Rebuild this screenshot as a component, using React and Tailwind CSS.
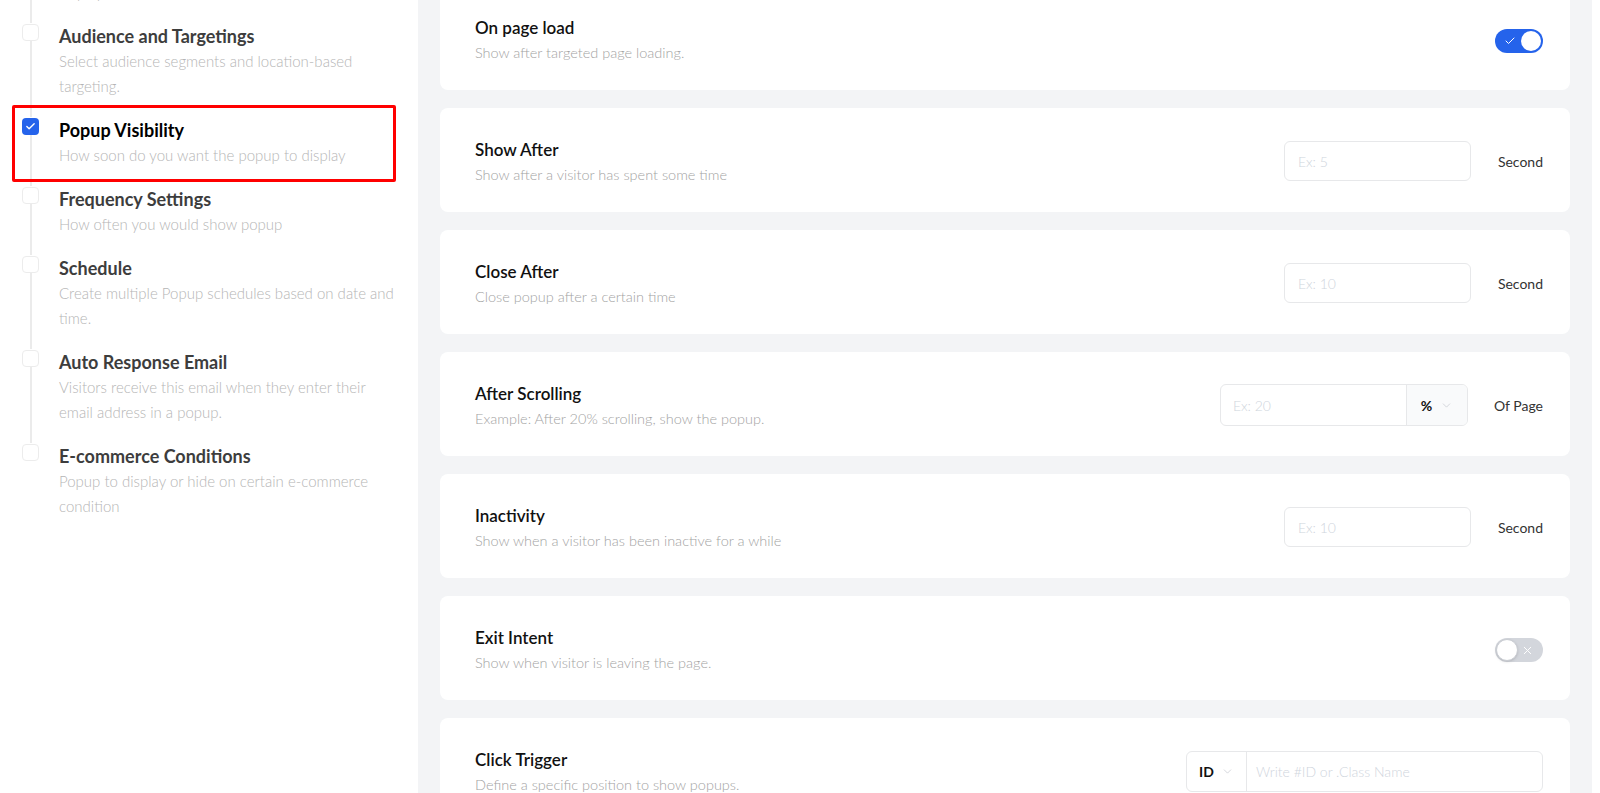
import React from "react";
import { Check, X, ChevronDown } from "lucide-react";

const steps = [
    { title: "Popup Position", desc: "Choose where on the page you want your popup to display" },
    { title: "Audience and Targetings", desc: "Select audience segments and location-based targeting." },
    { title: "Popup Visibility", desc: "How soon do you want the popup to display", active: true },
    { title: "Frequency Settings", desc: "How often you would show popup" },
    { title: "Schedule", desc: "Create multiple Popup schedules based on date and time." },
    { title: "Auto Response Email", desc: "Visitors receive this email when they enter their email address in a popup." },
    { title: "E-commerce Conditions", desc: "Popup to display or hide on certain e-commerce condition", last: true },
];

function Toggle({ on }) {
    return on ? (
        <div className="w-[48px] h-[24px] rounded-full bg-[#2563eb] flex items-center justify-between pl-[9px] pr-[2px]">
            <Check size={12} strokeWidth={2} className="text-white" />
            <div className="w-[20px] h-[20px] rounded-full bg-white" />
        </div>
    ) : (
        <div className="w-[48px] h-[24px] rounded-full bg-[#d3d6dc] flex items-center justify-between pl-[1px] pr-[9px]">
            <div className="w-[22px] h-[22px] rounded-full bg-white border border-[#c9ccd2] shadow-sm" />
            <X size={13} strokeWidth={1.8} className="text-white" />
        </div>
    );
}

function Field({ placeholder, unit }) {
    return (
        <div className="flex items-center gap-[27px]">
            <div className="w-[187px] h-[40px] rounded-[6px] border border-[#e7e8ea] bg-white flex items-center px-[13px] text-[14px] text-[#cfd5dd] font-light">
                {placeholder}
            </div>
            <span className="text-[14px] text-[#333]">{unit}</span>
        </div>
    );
}

function Card({ title, desc, children }) {
    return (
        <div className="bg-white rounded-[8px] flex items-center justify-between pl-[35px] pr-[27px] pt-[2px] shrink-0 h-[104px]">
            <div>
                <h3 className="text-[17px] leading-[24px] font-semibold text-[#111]">{title}</h3>
                <p className="mt-[3px] text-[14.5px] leading-[20px] font-light text-[#a3a3a3]">{desc}</p>
            </div>
            {children}
        </div>
    );
}

export default function App() {
    return (
        <div
            className="h-[793px] w-[1600px] overflow-hidden flex bg-white"
            style={{ fontFamily: "Lato, 'Liberation Sans', sans-serif" }}
        >
            {/* Sidebar */}
            <aside className="w-[418px] shrink-0 bg-white pl-[22px] pr-[20px]">
                <div className="-mt-[71px]">
                    {steps.map((s) => (
                        <div key={s.title} className="flex gap-[20px]">
                            <div className="flex flex-col items-center w-[17px] shrink-0">
                                {s.active ? (
                                    <div className="w-[17px] h-[17px] rounded-[4px] bg-[#2563eb] flex items-center justify-center mt-[1px]">
                                        <Check size={11} strokeWidth={3} className="text-white" />
                                    </div>
                                ) : (
                                    <div className="w-[17px] h-[17px] rounded-[4px] border border-[#ececec] bg-white mt-[1px]" />
                                )}
                                {!s.last && <div className="flex-1 w-[2px] bg-[#ebebeb]" />}
                            </div>
                            <div className={`relative w-[336px] ${s.last ? "" : "pb-[18px]"}`}>
                                {s.active && (
                                    <div className="absolute -left-[47px] -top-[12px] w-[384px] h-[77px] border-[3px] border-[#ff0000] rounded-[2px]" />
                                )}
                                <h4 className={`text-[18px] leading-[26px] font-bold ${s.active ? "text-black" : "text-[#3d3d3d]"}`}>
                                    {s.title}
                                </h4>
                                <p className="text-[15px] leading-[25px] font-light text-[#b5b5b5]">{s.desc}</p>
                            </div>
                        </div>
                    ))}
                </div>
            </aside>

            {/* Main */}
            <main className="flex-1 bg-[#f3f4f6] px-[22px]">
                <div className="-mt-[14px] flex flex-col gap-[18px]">
                    <Card title="On page load" desc="Show after targeted page loading.">
                        <div className="mt-[4px]">
                            <Toggle on />
                        </div>
                    </Card>
                    <Card title="Show After" desc="Show after a visitor has spent some time">
                        <Field placeholder="Ex: 5" unit="Second" />
                    </Card>
                    <Card title="Close After" desc="Close popup after a certain time">
                        <Field placeholder="Ex: 10" unit="Second" />
                    </Card>
                    <Card title="After Scrolling" desc="Example: After 20% scrolling, show the popup.">
                        <div className="flex items-center gap-[26px]">
                            <div className="w-[248px] h-[42px] rounded-[6px] border border-[#e7e8ea] flex overflow-hidden">
                                <div className="flex-1 flex items-center px-[12px] text-[14px] text-[#cfd5dd] font-light">Ex: 20</div>
                                <div className="w-[61px] border-l border-[#e7e8ea] bg-[#f9fafb] flex items-center justify-center gap-[8px]">
                                    <span className="text-[14px] font-bold text-[#111]">%</span>
                                    <ChevronDown size={13} strokeWidth={1.3} className="text-[#c4c8ce]" />
                                </div>
                            </div>
                            <span className="text-[14px] text-[#333]">Of Page</span>
                        </div>
                    </Card>
                    <Card title="Inactivity" desc="Show when a visitor has been inactive for a while">
                        <Field placeholder="Ex: 10" unit="Second" />
                    </Card>
                    <Card title="Exit Intent" desc="Show when visitor is leaving the page.">
                        <div className="mt-[2px]">
                            <Toggle />
                        </div>
                    </Card>
                    <Card title="Click Trigger" desc="Define a specific position to show popups.">
                        <div className="w-[357px] h-[41px] rounded-[6px] border border-[#e7e8ea] flex">
                            <div className="w-[60px] border-r border-[#e7e8ea] flex items-center justify-center gap-[7px]">
                                <span className="text-[14px] font-bold text-[#111]">ID</span>
                                <ChevronDown size={13} strokeWidth={1.3} className="text-[#c4c8ce]" />
                            </div>
                            <div className="flex-1 flex items-center px-[9px] text-[14px] text-[#cfd5dd] font-light">
                                Write #ID or .Class Name
                            </div>
                        </div>
                    </Card>
                </div>
            </main>
            <div className="w-[8px] shrink-0 bg-white" />
        </div>
    );
}
